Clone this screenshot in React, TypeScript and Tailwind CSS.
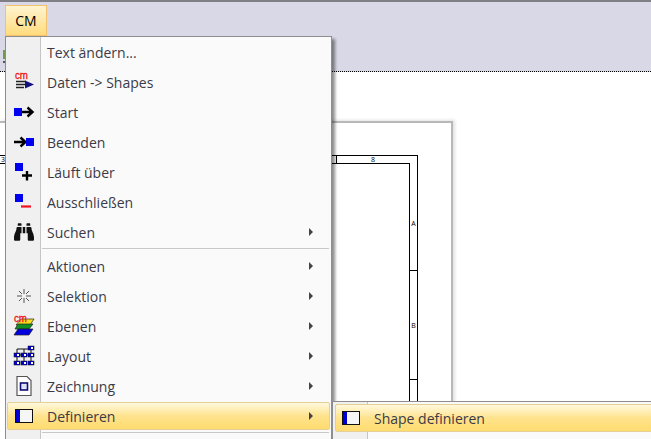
import { FaBinoculars } from "react-icons/fa";

const font = { fontFamily: '"Open Sans", "Noto Sans", sans-serif' };

function CmMark({ x = 0, y = 0 }: { x?: number; y?: number }) {
  return (
    <text x={x} y={y} fontFamily='"Liberation Sans", sans-serif' fontSize="11" fill="#f01010" stroke="#f01010" strokeWidth=".3" textLength="13" lengthAdjust="spacingAndGlyphs">
      cm
    </text>
  );
}

const icons: Record<string, React.ReactNode> = {
  data: (
    <svg width="22" height="22" viewBox="0 0 22 22" className="overflow-visible">
      <CmMark x={2} y={8} />
      <path d="M3 10.5h10M3 13.5h10M3 16.5h8" stroke="#222" strokeWidth="1.4" />
      <path d="M12 9.5l9 4-9 4z" fill="#101080" />
    </svg>
  ),
  start: (
    <svg width="22" height="22" viewBox="0 0 22 22">
      <rect x="1" y="7" width="8" height="8" fill="#0000f0" />
      <path d="M9 11h10M14.5 6.5l5 4.5-5 4.5" fill="none" stroke="#000" strokeWidth="2.4" />
    </svg>
  ),
  end: (
    <svg width="22" height="22" viewBox="0 0 22 22">
      <path d="M1 11h10M7.5 6.5l5 4.5-5 4.5" fill="none" stroke="#000" strokeWidth="2.4" />
      <rect x="13" y="7" width="8" height="8" fill="#0000f0" />
    </svg>
  ),
  over: (
    <svg width="22" height="22" viewBox="0 0 22 22">
      <rect x="2" y="2" width="8" height="8" fill="#0000f0" />
      <path d="M9 14.5h10M14 10v9.5" stroke="#000" strokeWidth="2.4" />
    </svg>
  ),
  exclude: (
    <svg width="22" height="22" viewBox="0 0 22 22">
      <rect x="2" y="3" width="8" height="8" fill="#0000f0" />
      <path d="M8 15.5h10" stroke="#f01020" strokeWidth="2.2" />
    </svg>
  ),
  search: <FaBinoculars size={20} color="#111" />,
  select: (
    <svg width="22" height="22" viewBox="0 0 22 22">
      <path d="M11 4v5M11 13v5M4 11h5M13 11h5M6 6l3 3M16 6l-3 3M6 16l3-3M16 16l-3-3" stroke="#555" strokeWidth="1" />
    </svg>
  ),
  layers: (
    <svg width="22" height="22" viewBox="0 0 22 22" className="overflow-visible">
      <path d="M8 4h13l-4 6H3z" fill="#f4e020" stroke="#222" strokeWidth=".7" />
      <path d="M5 9h15l-4 5H2z" fill="#109020" stroke="#222" strokeWidth=".7" />
      <path d="M5 14h15l-4 6H1z" fill="#0000e0" stroke="#222" strokeWidth=".7" />
      <CmMark x={1} y={7} />
    </svg>
  ),
  layout: (
    <svg width="22" height="22" viewBox="0 0 22 22">
      <path d="M4 10V4h13M4 10h14M11 4v14M18 3v15M4 10v8" fill="none" stroke="#111" strokeWidth="1" />
      {[[15, 1], [1, 8], [8, 8], [15, 8], [1, 16], [8, 16], [15, 16]].map(([x, y]) => (
        <g key={`${x}-${y}`}>
          <rect x={x} y={y} width="6" height="4" fill="#0000d0" stroke="#111" strokeWidth=".5" />
          <rect x={x + 3} y={y + 1} width="2" height="2" fill="#fff" />
        </g>
      ))}
    </svg>
  ),
  drawing: (
    <svg width="22" height="22" viewBox="0 0 22 22">
      <path d="M4 1.5h10l4 4v15H4z" fill="#fff" stroke="#555" strokeWidth="1.2" />
      <rect x="7.5" y="8" width="7" height="7" fill="#dfe4f4" stroke="#101070" strokeWidth="1.6" />
    </svg>
  ),
  define: (
    <svg width="18" height="14" viewBox="0 0 18 14">
      <rect x=".5" y=".5" width="17" height="13" fill="#f6f6f6" stroke="#111" />
      <rect x="1" y="1" width="4" height="12" fill="#0000d0" />
    </svg>
  ),
};

const groups = [
  [
    { label: "Text ändern..." },
    { label: "Daten -> Shapes", icon: "data" },
    { label: "Start", icon: "start" },
    { label: "Beenden", icon: "end" },
    { label: "Läuft über", icon: "over" },
    { label: "Ausschließen", icon: "exclude" },
    { label: "Suchen", icon: "search", sub: true },
  ],
  [
    { label: "Aktionen", sub: true },
    { label: "Selektion", icon: "select", sub: true },
    { label: "Ebenen", icon: "layers", sub: true },
    { label: "Layout", icon: "layout", sub: true },
    { label: "Zeichnung", icon: "drawing", sub: true },
    { label: "Definieren", icon: "define", sub: true, active: true },
  ],
];

const hot = "bg-gradient-to-b from-[#fff8dc] via-[#ffe38c] to-[#ffdc70] border border-[#e5cf94] rounded-[2px]";

function Row({ label, icon, sub, active }: { label: string; icon?: string; sub?: boolean; active?: boolean }) {
  return (
    <div className="relative flex h-[30px] items-center">
      {active && <div className={`absolute left-[1px] right-[1px] top-[1px] h-[28px] ${hot}`} />}
      <div className="relative flex h-full w-[35px] shrink-0 items-center justify-center">{icon && icons[icon]}</div>
      <span className="relative ml-[6px] flex-1 text-[14px] text-[#3a3a48]">{label}</span>
      {sub && <div className="relative mr-[18px] h-0 w-0 border-y-[4px] border-l-[4px] border-y-transparent border-l-[#444]" />}
    </div>
  );
}

function Separator() {
  return <div className="ml-[36px] mr-[2px] mt-[1px] mb-[2px] h-px bg-[#c8c8c8]" />;
}

function Drawing() {
  return (
    <div className="ml-[-20px] mt-[32px] mr-[33px] flex h-[400px] flex-col border border-black text-[7px] leading-none text-black">
      <div className="flex h-[7px] shrink-0">
        <div className="flex-1 pl-[20px]">3</div>
        <div className="flex w-[73px] justify-center border-l border-black">8</div>
        <div className="w-[8px]" />
      </div>
      <div className="flex flex-1">
        <div className="flex-1 border-t border-r border-black" />
        <div className="flex w-[7px] flex-col">
          <div className="flex h-[108px] items-center justify-center border-b border-black pt-[14px]">A</div>
          <div className="flex h-[109px] items-center justify-center border-b border-black">B</div>
        </div>
      </div>
    </div>
  );
}

export default function App() {
  return (
    <div className="relative h-[439px] w-[651px] overflow-hidden bg-white" style={font}>
      <div className="h-[72px] border-t-2 border-[#7f7f86] border-b border-b-black bg-[#d8d8e6] [border-bottom-style:dotted]">
        <div className="ml-[5px] mt-[3px] flex h-[31px] w-[42px] items-center justify-center border border-[#f3c26f] bg-gradient-to-b from-[#fff4cf] to-[#ffdb7c] text-[14px] text-black">
          CM
        </div>
      </div>
      <div className="pt-[49px]">
        <div className="h-[400px] w-[453px] border-t-2 border-r-2 border-[#b8b8b8] bg-white shadow-[2px_-1px_3px_rgba(0,0,0,0.12)]">
          <Drawing />
        </div>
      </div>

      <div className="absolute left-[3px] top-[50px] h-[9px] w-[2px] bg-[#6f9a50]" />
      <div className="absolute left-[3px] top-[61px] h-[2px] w-[2px] bg-[#555]" />

      {/* main menu */}
      <div className="absolute left-[5px] top-[36px] h-[420px] w-[327px] border border-[#8d8d8d] bg-[#fafafa] shadow-[3px_3px_3px_rgba(0,0,0,0.45)]">
        <div className="absolute bottom-0 left-0 top-0 w-[35px] border-r border-[#c5c5c5] bg-[#f0f0f0]" />
        <div className="relative">
          {groups.map((rows, i) => (
            <div key={i}>
              {rows.map((r) => (
                <Row key={r.label} {...r} />
              ))}
              <Separator />
            </div>
          ))}
        </div>
      </div>

      {/* submenu */}
      <div className="absolute left-[332px] top-[401px] h-[60px] w-[340px] border border-[#8d8d8d] bg-[#fafafa]">
        <div className="absolute bottom-0 left-0 top-0 w-[35px] border-r border-[#c5c5c5] bg-[#f0f0f0]" />
        <div className={`relative ml-[2px] mt-[2px] flex h-[28px] items-center ${hot}`}>
          <div className="ml-[6px] flex w-[18px] items-center">{icons.define}</div>
          <span className="ml-[14px] text-[14px] text-[#3a3a48]">Shape definieren</span>
        </div>
      </div>
    </div>
  );
}
